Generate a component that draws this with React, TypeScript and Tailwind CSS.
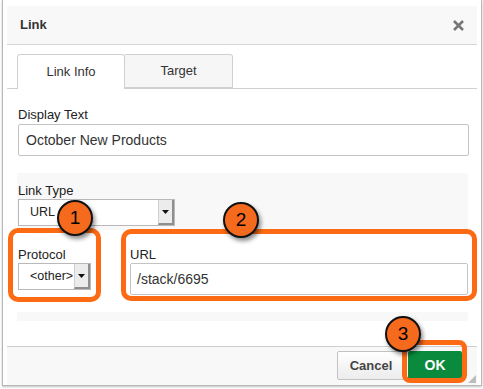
import React from 'react';

function Select({ value, width, arrowW = 16 }: { value: string; width: string; arrowW?: number }) {
  return (
    <div className={`flex h-[27px] ${width} border border-[#b9b9b9] bg-white text-[12.5px] text-[#222]`}>
      <div className="flex-1 flex items-center pl-[11px]">{value}</div>
      <div
        className="flex items-center justify-center bg-[#ececec] border-l border-[#cfcfcf] border-r-2 border-b-2 border-r-[#8f8f8f] border-b-[#8f8f8f]"
        style={{ width: arrowW }}
      >
        <svg width="7" height="4" viewBox="0 0 7 4">
          <path d="M0 0 L7 0 L3.5 4 Z" fill="#111" />
        </svg>
      </div>
    </div>
  );
}

function Badge({ n, className }: { n: string; className: string }) {
  return (
    <div
      className={`absolute w-[36px] h-[36px] rounded-full bg-[#f66a1d] border-2 border-[#111] flex items-center justify-center text-[19px] text-black shadow-[2px_3px_4px_rgba(0,0,0,0.45)] ${className}`}
    >
      {n}
    </div>
  );
}

export default function App() {
  return (
    <div className="relative w-[483px] h-[389px] bg-white font-['Liberation_Sans',Arial,sans-serif] overflow-hidden">
      {/* Dialog */}
      <div className="ml-[2px] w-[480px] h-[386px] border-x border-b border-[#b8b8b8] shadow-[0_1px_2px_rgba(0,0,0,0.25)] px-[4px] pt-[6px] flex flex-col">
        {/* Title */}
        <div className="h-[39px] bg-[#f8f8f8] border-b border-[#d4d4d4] flex items-center justify-between pl-[13px] pr-[13px]">
          <span className="text-[13px] font-bold text-[#333]">Link</span>
          <svg width="11" height="11" viewBox="0 0 11 11">
            <path d="M1 1 L10 10 M10 1 L1 10" stroke="#777" strokeWidth="2.6" />
          </svg>
        </div>

        {/* Body */}
        <div className="flex-1 bg-white pt-[9px]">
          <div className="flex border-b border-[#d0d0d0] pl-[10px]">
            <div className="w-[108px] h-[35px] -mb-px bg-white border border-b-0 border-[#d0d0d0] rounded-t-[3px] flex items-center justify-center text-[13px] text-[#333]">
              Link Info
            </div>
            <div className="w-[108px] h-[34px] bg-[#f6f6f6] border border-l-0 border-[#d0d0d0] rounded-tr-[3px] flex items-center justify-center text-[13px] text-[#333]">
              Target
            </div>
          </div>

          <div className="ml-[10px] w-[452px] pt-[18px]">
            <div className="ml-px text-[13px] leading-[16px] text-[#222]">Display Text</div>
            <div className="ml-px mt-px w-[451px] h-[32px] border border-[#c4c4c4] rounded-[2px] flex items-center pl-[7px] text-[14px] text-[#333]">
              October New Products
            </div>

            <div className="mt-[17px] w-[451px] bg-[#f8f8f8] pt-[10px] pb-[9px]">
              <div className="ml-px text-[13px] leading-[16px] text-[#222]">Link Type</div>
              <div className="ml-px">
                <Select value="URL" width="w-[157px]" />
              </div>
              <div className="mt-[4px] h-[82px] bg-white flex pt-[17px]">
                <div className="ml-px w-[112px]">
                  <div className="text-[13px] leading-[16px] text-[#222]">Protocol</div>
                  <Select value="<other>" width="w-[73px]" />
                </div>
                <div className="flex-1">
                  <div className="ml-px text-[13px] leading-[16px] text-[#222]">URL</div>
                  <div className="ml-px w-[338px] h-[32px] border border-[#c4c4c4] rounded-[2px] flex items-center pl-[6px] text-[14px] text-[#333]">
                    /stack/6695
                  </div>
                </div>
              </div>
            </div>
          </div>
        </div>

        {/* Footer */}
        <div className="h-[39px] bg-[#f8f8f8] border-t border-[#cfcfcf] flex items-start justify-end pt-[4px] pr-[15px]">
          <div className="w-[68px] h-[29px] border border-[#c2c2c2] rounded-[2px] bg-gradient-to-b from-white to-[#ececec] flex items-center justify-center text-[13px] font-bold text-[#444]">
            Cancel
          </div>
          <div className="ml-[3px] w-[54px] h-[29px] bg-[#0a8a3c] rounded-[2px] flex items-center justify-center text-[14px] font-bold text-white">
            OK
          </div>
        </div>
      </div>

      {/* resize grip */}
      <svg className="absolute left-[468px] top-[375px]" width="8" height="8" viewBox="0 0 8 8">
        <path d="M8 0 L8 8 L0 8 Z" fill="#bdbdbd" />
      </svg>

      {/* Annotations */}
      <div className="absolute left-[8px] top-[228px] w-[93px] h-[74px] border-[5px] border-[#fd6a14] rounded-[10px]" />
      <div className="absolute left-[121px] top-[229px] w-[356px] h-[72px] border-[5px] border-[#fd6a14] rounded-[10px]" />
      <div className="absolute left-[402px] top-[340px] w-[65px] h-[43px] border-[5px] border-[#fd6a14] rounded-[8px]" />
      <Badge n="1" className="left-[57px] top-[200px]" />
      <Badge n="2" className="left-[223px] top-[202px]" />
      <Badge n="3" className="left-[385px] top-[316px]" />
    </div>
  );
}
